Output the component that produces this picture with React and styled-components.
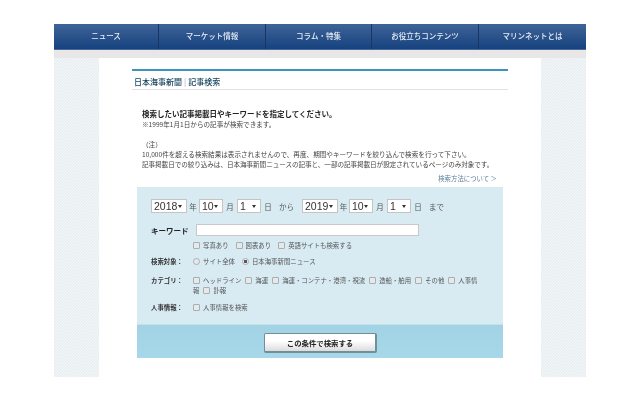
import React from 'react';
import styled, { createGlobalStyle } from 'styled-components';

const GlobalStyle = createGlobalStyle`
  html, body {
    margin: 0;
    padding: 0;
    background: #fff;
    overflow: hidden;
  }
  body {
    font-family: "Noto Sans CJK JP", "Liberation Sans", sans-serif;
    color: #333;
  }
`;

const Page = styled.div`
  width: 532px;
  height: 400px;
  margin: 0 auto;
  padding-top: 24px;
  box-sizing: border-box;
  filter: blur(0.3px);
`;

const Nav = styled.nav`
  display: grid;
  grid-template-columns: 105px 107px 106px 107px 107px;
  height: 26px;
  background: linear-gradient(#3f6497, #16427f);
  border-bottom: 1px solid #48689a;
  box-sizing: border-box;
`;

const NavItem = styled.a`
  display: flex;
  align-items: center;
  justify-content: center;
  color: #e8eef6;
  font-size: 7.5px;
  font-weight: 500;
  border-right: 1px solid #1b3560;
  padding-bottom: 3px;
  &:last-child {
    border-right: 0;
  }
`;

const GreyBand = styled.div`
  height: 8px;
  background: #e7e7e7;
`;

const Frame = styled.div`
  height: 319px;
  padding: 0 45px;
  background-color: #f5f8f8;
  background-image: linear-gradient(
    135deg,
    #e9eff1 25%,
    transparent 25%,
    transparent 50%,
    #e9eff1 50%,
    #e9eff1 75%,
    transparent 75%
  );
  background-size: 3px 3px;
`;

const Sheet = styled.main`
  height: 100%;
  background: #fff;
  padding: 11px 33px 0;
  box-sizing: border-box;
`;

const Heading = styled.h1`
  margin: 0;
  height: 14px;
  padding: 4px 0 0 2px;
  border-top: 2px solid #3a94bd;
  border-bottom: 1px solid #e2e2e2;
  font-size: 8px;
  font-weight: 500;
  line-height: 14px;
  color: #123f5c;
`;

const Divider = styled.span`
  color: #aab;
  margin: 0 2px;
  font-weight: 400;
`;

const Intro = styled.section`
  padding: 19px 10px 0;
`;

const Lead = styled.p`
  margin: 0;
  font-size: 7.5px;
  line-height: 10px;
  font-weight: 700;
  color: #222;
`;

const Note = styled.p`
  margin: ${(p) => p.$top || 0}px 0 0;
  font-size: 6.6px;
  line-height: 10px;
  color: #444;
  white-space: nowrap;
  letter-spacing: ${(p) => (p.$tight ? '-0.06px' : '0')};
`;

const HelpLink = styled.a`
  display: block;
  margin: 5px 0 0;
  padding-right: 11px;
  text-align: right;
  font-size: 6.4px;
  line-height: 10px;
  color: #5b7f9b;
`;

const SearchPanel = styled.form`
  margin: 3px 5px 0;
  height: 171px;
  display: flex;
  flex-direction: column;
  background: #d8ebf3;
`;

const Fields = styled.div`
  flex: 1;
  padding: 11px 14px 0;
`;

const DateRow = styled.div`
  display: flex;
  align-items: center;
  height: 16px;
  font-size: 7.5px;
  color: #555;
`;

const SelectBox = styled.span`
  display: flex;
  align-items: center;
  justify-content: space-between;
  box-sizing: border-box;
  width: ${(p) => p.$w}px;
  height: 14px;
  padding: 0 4px 0 2px;
  background: #fff;
  border: 1px solid #c4c4c4;
  font-family: "Liberation Sans", sans-serif;
  font-size: 10.5px;
  color: #333;
  &::after {
    content: '';
    border-left: 2px solid transparent;
    border-right: 2px solid transparent;
    border-top: 3px solid #333;
  }
`;

const DateWord = styled.span`
  flex: none;
  width: ${(p) => p.$w}px;
  margin-left: ${(p) => p.$gap || 0}px;
  margin-right: ${(p) => p.$after || 0}px;
  text-align: center;
  white-space: nowrap;
`;

const KeywordRow = styled.div`
  display: flex;
  align-items: center;
  height: 12px;
  margin-top: 10px;
`;

const KeywordLabel = styled.label`
  width: 45px;
  font-size: 7.5px;
  font-weight: 700;
  color: #222;
`;

const KeywordInput = styled.div`
  width: 223px;
  height: 12px;
  box-sizing: border-box;
  background: #fff;
  border: 1px solid #c8c8c8;
`;

const OptionRow = styled.div`
  display: flex;
  align-items: center;
  margin: ${(p) => p.$top}px 0 0 42px;
  min-height: 9px;
  font-size: 6.4px;
  color: #555;
`;

const FieldRow = styled.div`
  display: grid;
  grid-template-columns: 42px 1fr;
  margin-top: ${(p) => p.$top}px;
`;

const FieldLabel = styled.span`
  font-size: 6.4px;
  line-height: 10px;
  font-weight: 700;
  color: #333;
`;

const FieldBody = styled.div`
  max-width: 289px;
  font-size: 6.4px;
  line-height: 10px;
  color: #555;
`;

const Check = styled.i`
  display: inline-block;
  flex: none;
  vertical-align: -1px;
  width: 5px;
  height: 5px;
  margin: 0 3px 0 ${(p) => p.$gap ?? 4}px;
  background: #e6e9ea;
  border: 1px solid #a9aeb2;
  border-radius: 1px;
`;

const Radio = styled.i`
  display: inline-block;
  vertical-align: -1px;
  box-sizing: border-box;
  width: 7px;
  height: 7px;
  margin: 0 3px 0 ${(p) => p.$gap ?? 7}px;
  border: 1px solid #a9aeb2;
  border-radius: 50%;
  background: ${(p) => (p.$on ? 'radial-gradient(circle, #555 0 1.4px, #eee 1.8px)' : '#e6e9ea')};
`;

const SubmitBar = styled.div`
  height: 34px;
  display: flex;
  align-items: center;
  justify-content: center;
  background: linear-gradient(#a1d3e5, #a6d8e9);
  border-top: 1px solid #c3e2ed;
  box-sizing: border-box;
`;

const SubmitButton = styled.button`
  width: 113px;
  height: 20px;
  margin: 2px 0 0 1px;
  padding: 0;
  background: linear-gradient(#fff, #fff 40%, #dcdcdc);
  border: 1px solid #6f8f9d;
  border-width: 1px 2px 2px 1px;
  border-radius: 2px;
  font-family: inherit;
  font-size: 7.4px;
  font-weight: 700;
  color: #222;
`;

const categories = ['海運', '海運・コンテナ・港湾・視流', '造船・舶用', 'その他'];

export default function App() {
  return (
    <Page>
      <GlobalStyle />
      <Nav>
        <NavItem>ニュース</NavItem>
        <NavItem>マーケット情報</NavItem>
        <NavItem>コラム・特集</NavItem>
        <NavItem>お役立ちコンテンツ</NavItem>
        <NavItem>マリンネットとは</NavItem>
      </Nav>
      <GreyBand />
      <Frame>
        <Sheet>
          <Heading>
            日本海事新聞<Divider>|</Divider>記事検索
          </Heading>
          <Intro>
            <Lead>検索したい記事掲載日やキーワードを指定してください。</Lead>
            <Note>※1999年1月1日からの記事が検索できます。</Note>
            <Note $top={10}>（注）</Note>
            <Note>10,000件を超える検索結果は表示されませんので、再度、期間やキーワードを絞り込んで検索を行って下さい。</Note>
            <Note $tight>記事掲載日での絞り込みは、日本海事新聞ニュースの記事と、一部の記事掲載日が設定されているページのみ対象です。</Note>
          </Intro>
          <HelpLink>検索方法について ＞</HelpLink>
          <SearchPanel>
            <Fields>
              <DateRow>
                <SelectBox $w={36}>2018</SelectBox>
                <DateWord $w={12}>年</DateWord>
                <SelectBox $w={24}>10</SelectBox>
                <DateWord $w={14}>月</DateWord>
                <SelectBox $w={24}>1</SelectBox>
                <DateWord $w={14}>日</DateWord>
                <DateWord $w={15} $gap={4} $after={8}>から</DateWord>
                <SelectBox $w={36}>2019</SelectBox>
                <DateWord $w={11}>年</DateWord>
                <SelectBox $w={24}>10</SelectBox>
                <DateWord $w={14}>月</DateWord>
                <SelectBox $w={24}>1</SelectBox>
                <DateWord $w={14}>日</DateWord>
                <DateWord $w={15} $gap={4}>まで</DateWord>
              </DateRow>
              <KeywordRow>
                <KeywordLabel>キーワード</KeywordLabel>
                <KeywordInput />
              </KeywordRow>
              <OptionRow $top={5}>
                <Check $gap={0} />写真あり
                <Check $gap={7} />図表あり
                <Check $gap={7} />英語サイトも検索する
              </OptionRow>
              <FieldRow $top={7}>
                <FieldLabel>検索対象：</FieldLabel>
                <FieldBody>
                  <Radio $gap={0} />サイト全体
                  <Radio $on />日本海事新聞ニュース
                </FieldBody>
              </FieldRow>
              <FieldRow $top={9}>
                <FieldLabel>カテゴリ：</FieldLabel>
                <FieldBody>
                  <Check $gap={0} />ヘッドライン
                  {categories.map((c) => (
                    <React.Fragment key={c}>
                      <Check />{c}
                    </React.Fragment>
                  ))}
                  <Check />人事情報
                  <Check />訃報
                </FieldBody>
              </FieldRow>
              <FieldRow $top={7}>
                <FieldLabel>人事情報：</FieldLabel>
                <FieldBody>
                  <Check $gap={0} />人事情報を検索
                </FieldBody>
              </FieldRow>
            </Fields>
            <SubmitBar>
              <SubmitButton type="button">この条件で検索する</SubmitButton>
            </SubmitBar>
          </SearchPanel>
        </Sheet>
      </Frame>
    </Page>
  );
}
